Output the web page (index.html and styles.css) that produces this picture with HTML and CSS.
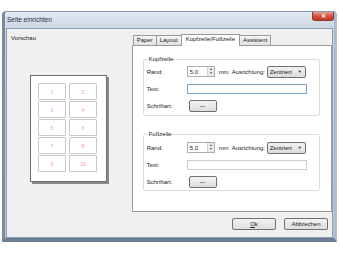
FILE: index.html
```html
<!DOCTYPE html>
<html lang="de">
<head>
  <meta charset="UTF-8">
  <title>Seite einrichten</title>
  <link rel="stylesheet" href="styles.css">
</head>
<body>
  <div class="window">
    <div class="titlebar">
      <span class="title">Seite einrichten</span>
      <span class="close">&#x2715;</span>
    </div>
    <div class="client">
      <div class="preview-pane">
        <div class="pane-title">Vorschau</div>
        <div class="page">
          <div class="cell">1</div>
          <div class="cell">2</div>
          <div class="cell">3</div>
          <div class="cell">4</div>
          <div class="cell">5</div>
          <div class="cell">6</div>
          <div class="cell">7</div>
          <div class="cell">8</div>
          <div class="cell">9</div>
          <div class="cell">10</div>
        </div>
      </div>
      <div class="right-pane">
        <div class="tabs">
          <div class="tab">Paper</div>
          <div class="tab">Layout</div>
          <div class="tab active">Kopfzeile/Fußzeile</div>
          <div class="tab">Assistent</div>
        </div>
        <div class="panel">
          <fieldset class="group">
            <legend>Kopfzeile</legend>
            <div class="row">
              <span class="label">Rand:</span>
              <div class="spin"><span class="spin-value">5.0</span><span class="spin-arrows"><i>&#9652;</i><i>&#9662;</i></span></div>
              <span class="unit">mm</span>
              <span class="label-align">Ausrichtung:</span>
              <div class="select">Zentriert<span class="arrow">&#9660;</span></div>
            </div>
            <div class="row">
              <span class="label">Text:</span>
              <div class="text-input focus"></div>
            </div>
            <div class="row">
              <span class="label">Schriftart:</span>
              <div class="btn small">&middot;&middot;&middot;</div>
            </div>
          </fieldset>
          <fieldset class="group footer">
            <legend>Fußzeile</legend>
            <div class="row">
              <span class="label">Rand:</span>
              <div class="spin"><span class="spin-value">5.0</span><span class="spin-arrows"><i>&#9652;</i><i>&#9662;</i></span></div>
              <span class="unit">mm</span>
              <span class="label-align">Ausrichtung:</span>
              <div class="select">Zentriert<span class="arrow">&#9660;</span></div>
            </div>
            <div class="row">
              <span class="label">Text:</span>
              <div class="text-input"></div>
            </div>
            <div class="row">
              <span class="label">Schriftart:</span>
              <div class="btn small">&middot;&middot;&middot;</div>
            </div>
          </fieldset>
        </div>
        <div class="buttons">
          <div class="btn wide"><u>O</u>k</div>
          <div class="btn wide">Abbrechen</div>
        </div>
      </div>
    </div>
  </div>
</body>
</html>
```

FILE: styles.css
```css
* {
  margin: 0;
  padding: 0;
  box-sizing: border-box;
}
body {
  font-family: "Liberation Sans", Arial, sans-serif;
  font-size: 6px;
  color: #222;
  background: #fff;
}
.window {
  margin: 11px 0 0 2px;
  width: 335px;
  height: 231px;
  background: linear-gradient(to bottom, #e2e9f1, #c6d3e1 20px, #b3c4d6);
  border-left: 3px solid #7b8ca1;
  border-bottom: 4px solid #6c7e94;
  border-right: 3px solid #a8bcd2;
  border-top: 1px solid #8898ab;
  border-radius: 4px 4px 0 0;
  display: flex;
  flex-direction: column;
}
.titlebar {
  height: 16px;
  display: flex;
  align-items: flex-start;
  justify-content: space-between;
  padding-left: 2px;
}
.title {
  margin-top: 4px;
  font-size: 6.5px;
  color: #1e2a38;
}
.close {
  width: 22px;
  height: 9px;
  background: linear-gradient(to bottom, #e9a493, #d2543f 50%, #c23a25);
  border: 1px solid #8c3a2e;
  border-top: none;
  border-radius: 0 0 3px 3px;
  color: #fff;
  font-size: 6px;
  font-weight: bold;
  text-align: center;
  line-height: 8px;
}
.client {
  flex: 1;
  margin: 0 1px;
  background: #f0f0f0;
  border: 1px solid #8f9fb2;
  display: flex;
}
.preview-pane {
  width: 124px;
  padding: 6px 0 0 4px;
}
.pane-title {
  height: 8px;
}
.page {
  margin: 32px 0 0 19px;
  width: 77px;
  height: 107px;
  background: #fff;
  border: 1px solid #6e6e6e;
  box-shadow: 2px 2px 0 #8a8a8a;
  display: grid;
  grid-template-columns: 28px 28px;
  grid-auto-rows: 17px;
  column-gap: 3px;
  row-gap: 1px;
  padding: 7px 0 0 7px;
}
.cell {
  border: 1px solid #c8c8c8;
  border-radius: 1px;
  color: #f19aa6;
  font-size: 5px;
  display: flex;
  align-items: center;
  justify-content: center;
}
.right-pane {
  width: 201px;
  padding-top: 5px;
  margin-left: 1px;
}
.tabs {
  display: flex;
  padding-left: 1px;
  height: 11px;
  align-items: flex-end;
}
.tab {
  height: 10px;
  padding: 0 3px;
  border: 1px solid #9a9a9a;
  border-bottom: none;
  background: linear-gradient(to bottom, #f4f4f4, #e2e2e2);
  line-height: 9px;
  margin-right: -1px;
}
.tab.active {
  height: 12px;
  background: #fff;
  position: relative;
  z-index: 1;
  margin-bottom: -1px;
  padding: 0 4px;
}
.panel {
  height: 167px;
  background: #fff;
  border: 1px solid #9a9a9a;
  padding: 10px 0 0 10px;
}
.group {
  width: 177px;
  height: 60px;
  border: 1px solid #dcdcdc;
  border-radius: 2px;
  padding: 1px 0 0 3px;
  margin-bottom: 15px;
}
.group.footer {
  padding-top: 2px;
}
.group legend {
  padding: 0 1px;
  margin-left: 1px;
}
.row {
  display: flex;
  align-items: center;
  height: 17px;
}
.label {
  width: 40px;
}
.spin {
  width: 28px;
  height: 11px;
  border: 1px solid #abadb3;
  display: flex;
  align-items: center;
  background: #fff;
}
.spin-value {
  flex: 1;
  padding-left: 2px;
}
.spin-arrows {
  width: 7px;
  height: 9px;
  display: flex;
  flex-direction: column;
  border-left: 1px solid #d4d4d4;
  background: #eaeaea;
}
.spin-arrows i {
  font-style: normal;
  font-size: 4px;
  line-height: 4px;
  text-align: center;
  color: #555;
}
.unit {
  margin-left: 4px;
  width: 13px;
}
.label-align {
  width: 35px;
}
.select {
  width: 39px;
  height: 12px;
  border: 1px solid #707070;
  border-radius: 2px;
  background: linear-gradient(to bottom, #f2f2f2, #dcdcdc);
  display: flex;
  align-items: center;
  justify-content: space-between;
  padding: 0 3px 0 2px;
}
.arrow {
  font-size: 4px;
}
.text-input {
  width: 120px;
  height: 10px;
  border: 1px solid #c7ccd3;
  background: #fff;
}
.text-input.focus {
  border-color: #7ea2c8;
}
.btn {
  border: 1px solid #707070;
  border-radius: 2px;
  background: linear-gradient(to bottom, #f3f3f3, #dddddd);
  display: flex;
  align-items: center;
  justify-content: center;
}
.btn.small {
  width: 28px;
  height: 12px;
  margin-left: 2px;
  font-weight: bold;
}
.buttons {
  display: flex;
  justify-content: flex-end;
  gap: 8px;
  padding: 6px 4px 0 0;
}
.btn.wide {
  width: 44px;
  height: 12px;
}
```
